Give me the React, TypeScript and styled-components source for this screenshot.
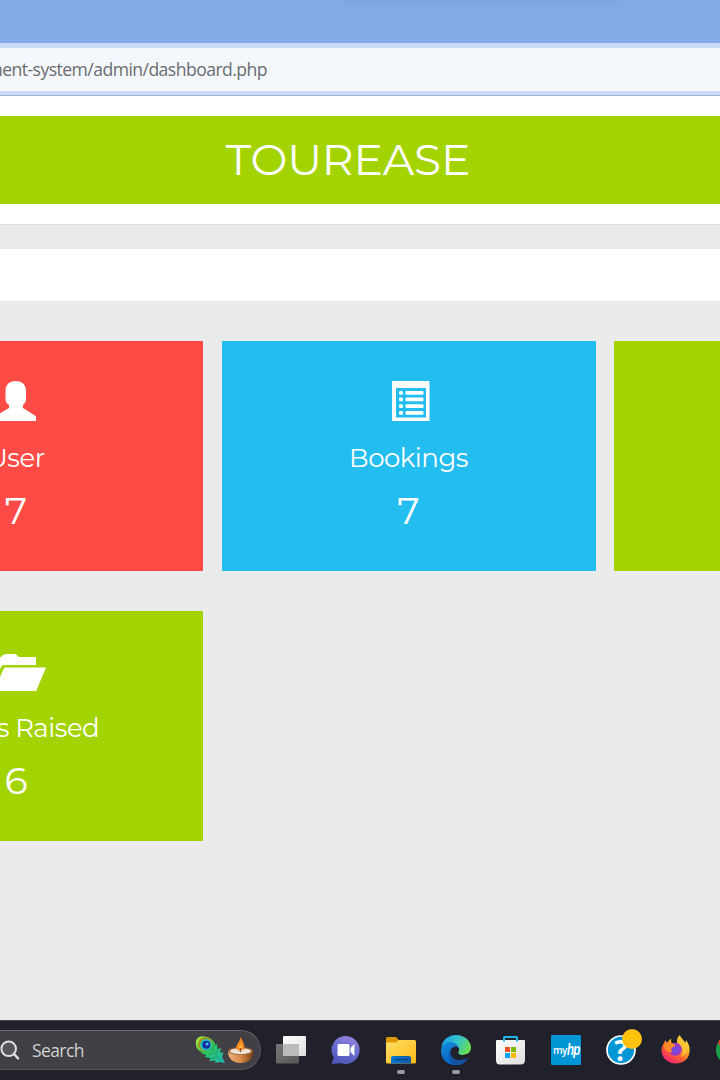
import React from 'react';
import styled, { createGlobalStyle } from 'styled-components';

const GlobalStyle = createGlobalStyle`
  * { box-sizing: border-box; }
  html, body { margin: 0; padding: 0; }
  body { background: #ebebeb; overflow: hidden; }
  svg { display: block; overflow: visible; }
`;

const Screen = styled.div`
  width: 720px;
  height: 1080px;
  display: flex;
  flex-direction: column;
  overflow: hidden;
  background: #ebebeb;
  font-family: Montserrat, Inter, sans-serif;
`;

const TabStrip = styled.div`
  height: 43px;
  flex: none;
  display: flex;
  justify-content: center;
  overflow: hidden;
  background: #85ace9;
`;

const TabShadow = styled.div`
  width: 270px;
  height: 10px;
  margin: -12px 0 0 242px;
  box-shadow: 0 0 12px 1px rgba(70, 95, 140, 0.28);
`;

const AddressRow = styled.div`
  height: 53px;
  flex: none;
  padding: 5px 0 4px;
  background: #cbdcf6;
  border-bottom: 1px solid #9eb0cc;
`;

const AddressBar = styled.div`
  height: 43px;
  width: 100%;
  padding: 0 453px 1px 0;
  display: flex;
  align-items: center;
  justify-content: flex-end;
  overflow: hidden;
  background: #f4f7fc;
`;

const Url = styled.span`
  flex: none;
  white-space: nowrap;
  color: #6b6d70;
  font: 400 17.6px/24px 'Open Sans', 'Noto Sans', sans-serif;
  letter-spacing: -0.55px;
`;

const Header = styled.header`
  height: 129px;
  flex: none;
  padding: 20px 0;
  background: #fff;
  border-bottom: 1px solid #dcdcdc;
`;

const Brand = styled.h1`
  margin: 0;
  height: 88px;
  padding: 0 24px 0 0;
  background: #a3d300;
  color: #fff;
  font-size: 44px;
  font-weight: 400;
  line-height: 86px;
  letter-spacing: -0.2px;
  text-align: center;
`;

const Breadcrumb = styled.div`
  height: 52px;
  flex: none;
  margin-top: 24px;
  background: #fff;
`;

const Cards = styled.main`
  flex: 1;
  display: grid;
  grid-template-columns: repeat(3, 374px);
  grid-auto-rows: 230px;
  gap: 40px 18.5px;
  margin: 40px 0 0 -171px;
`;

const Card = styled.section<{ $color: string }>`
  padding-top: 40px;
  display: flex;
  flex-direction: column;
  align-items: center;
  background: ${p => p.$color};
  color: #fff;
`;

const CardTitle = styled.h3`
  margin: 19px 0 0;
  font-size: 26px;
  font-weight: 400;
  line-height: 36px;
  letter-spacing: -0.5px;
  white-space: nowrap;
`;

const Count = styled.span`
  height: 54px;
  margin-top: 8px;
  font-size: 38px;
  font-weight: 400;
  line-height: 54px;
`;

const Taskbar = styled.footer`
  height: 60px;
  flex: none;
  padding-bottom: 1px;
  display: flex;
  align-items: center;
  overflow: hidden;
  border-top: 1px solid #45474b;
  background: #20212a;
`;

const SearchBox = styled.div`
  width: 281px;
  height: 40px;
  flex: none;
  margin-left: -20px;
  padding: 0 7px 0 19px;
  display: flex;
  align-items: center;
  border: 1px solid #55555b;
  border-top-color: #67676c;
  border-radius: 20px;
  background: #404045;
`;

const SearchLabel = styled.span`
  flex: 1;
  margin-left: 13px;
  color: #d2d2d2;
  font: 400 17.5px/24px 'Open Sans', 'Noto Sans', sans-serif;
  letter-spacing: -0.6px;
`;

const Apps = styled.nav`
  display: flex;
  flex: none;
  gap: 25px;
  margin-left: 15px;
`;

const AppButton = styled.div<{ $running?: boolean }>`
  position: relative;
  width: 30px;
  height: 30px;
  flex: none;
  &::after {
    content: '';
    display: ${p => (p.$running ? 'block' : 'none')};
    position: absolute;
    left: 11px;
    top: 35px;
    width: 8px;
    height: 4px;
    border-radius: 2px;
    background: #9b9b9f;
  }
`;

const HpTile = styled.div`
  width: 30px;
  height: 30px;
  padding-left: 2px;
  display: flex;
  align-items: center;
  border-radius: 1px;
  background: #0096d6;
  color: #fff;
  font: 600 10px/30px 'Open Sans', sans-serif;
  letter-spacing: -0.6px;
`;

const HpMark = styled.b`
  font: italic 700 16px/28px 'Liberation Sans', sans-serif;
  letter-spacing: -1px;
  transform: scaleX(0.72);
  transform-origin: left;
`;

const HelpMark = styled.span`
  position: absolute;
  inset: 0;
  color: #fff;
  font: 700 28px/30px 'Open Sans', sans-serif;
  text-align: center;
`;

const Badge = styled.i`
  position: absolute;
  left: 16px;
  top: -6px;
  width: 20px;
  height: 20px;
  border-radius: 50%;
  background: #ffc20e;
`;

const UserIcon = () => (
  <svg width="42" height="40" viewBox="0 0 42 40" fill="#fff">
    <path d="M10.500 10C10.500 3.500 14.500 0 20.800 0S31 3.500 31 10v8c0 3-1.200 4.500-3 6v3l12 7.500q1 .7 1 2V40H0v-3.500q0-1.300 1-2L14 27v-3c-2.400-1.500-3.500-3-3.500-6Z" />
  </svg>
);

const ListIcon = () => (
  <svg width="42" height="40" viewBox="-4 0 42 40" fill="#fff">
    <path fillRule="evenodd" d="M0 0h37.500v40H0V0ZM4 7v29.500h30V7Z" />
    {[10, 16.500, 23.200, 30].map(y => (
      <g key={y}>
        <rect x="7" y={y} width="4" height="3.800" rx="1.200" />
        <rect x="13.500" y={y} width="18" height="3.800" rx="1" />
      </g>
    ))}
  </svg>
);

const FolderOpenIcon = () => (
  <svg width="60" height="40" viewBox="0 0 60 40" fill="#fff">
    <path d="M0 36V11q0-5 5-5h10q2-3 5-3h8q3 0 4.500 3H50v8H18q-2 0-3 2L5 38H2q-2 0-2-2Z" />
    <path d="M19.700 16.500H60L50.200 40H9q-1 0-.6-1L17.500 18q.7-1.500 2.200-1.500Z" />
  </svg>
);

const SearchIcon = () => (
  <svg width="19" height="20" viewBox="0 0 19 20">
    <circle cx="8.700" cy="8.800" r="7.300" fill="#55565a" stroke="#dedfe1" strokeWidth="2" />
    <path d="m13.900 14 4.200 4.300" stroke="#dedfe1" strokeWidth="2.500" strokeLinecap="round" />
  </svg>
);

const FestiveIcons = () => (
  <svg width="58" height="32" viewBox="0 0 58 32">
    <defs>
      <linearGradient id="feather" x1="0" y1="0" x2="1" y2="1">
        <stop offset="0" stopColor="#c5e534" /><stop offset=".45" stopColor="#27c95a" /><stop offset="1" stopColor="#27b8bd" />
      </linearGradient>
      <linearGradient id="bowl" x1="0" x2="1">
        <stop offset="0" stopColor="#f0b27a" /><stop offset=".5" stopColor="#d98a49" /><stop offset="1" stopColor="#804215" />
      </linearGradient>
    </defs>
    <path d="M.8 9C.8 3 6 1 12 3c4 1 7 4 8.500 8l1.500-1 .5 5 3.500-1-1 5 3.500-1-1.500 5 3 6-5-1-5 1 .5-2.500-6 .5 1-3-6-1 2-2-6-2 2-1C3 17 .8 14 .8 9Z" fill="url(#feather)" />
    <path d="m15 14 12 13M18 16l1-5m2 9 2-5M18 19l-5 2m9 2-6 2" stroke="#138c63" strokeWidth=".7" fill="none" />
    <circle cx="10.300" cy="10.300" r="7" fill="#a5901f" />
    <circle cx="11" cy="10.800" r="5.800" fill="#16c4c6" />
    <circle cx="11.300" cy="10.800" r="4" fill="#102f9c" />
    <circle cx="12" cy="10" r="1.500" fill="#45c5e8" />
    <path d="M33 17c0 7 4 12 12.500 12S58 24 58 17Z" fill="url(#bowl)" />
    <ellipse cx="45.500" cy="17" rx="12.500" ry="4" fill="#99612f" />
    <ellipse cx="45.500" cy="17.200" rx="10.500" ry="3" fill="#eee1d4" />
    <path d="M45.500 3c2 4 4.500 7.500 3.500 11.500-.7 2.500-5.500 3-7.300.4C39.800 11.500 45 8.500 45.500 3Z" fill="#ff8a20" />
    <path d="M46 9c.8 3 2 6-1 6-3-1 0-3 1-6Z" fill="#ffbd46" />
    <path d="M45.300 14v4" stroke="#6d3518" />
  </svg>
);

const TaskViewIcon = () => (
  <svg width="30" height="30" viewBox="0 0 30 30">
    <defs>
      <linearGradient id="front" x1="0" y1="0" x2="1" y2="1"><stop stopColor="#fff" /><stop offset="1" stopColor="#dedede" /></linearGradient>
      <linearGradient id="back" x1="0" y1="0" x2="1" y2="1"><stop stopColor="#777" /><stop offset="1" stopColor="#555" /></linearGradient>
    </defs>
    <rect x="0" y="9" width="23" height="19.500" rx="1" fill="url(#back)" />
    <rect x="7" y="1" width="23" height="20" rx="1" fill="url(#front)" />
    <path d="M7 9h16v12H7Z" fill="#bbb" />
  </svg>
);

const ChatIcon = () => (
  <svg width="30" height="30" viewBox="0 0 30 30">
    <defs>
      <linearGradient id="chat" x1=".7" y1="0" x2=".3" y2="1">
        <stop stopColor="#9584dc" /><stop offset=".5" stopColor="#656bcd" /><stop offset="1" stopColor="#5055ba" />
      </linearGradient>
    </defs>
    <path d="M15 1a14 14 0 1 1-5 27.200L.5 29l2.200-6.600A14 14 0 0 1 15 1Z" fill="url(#chat)" />
    <rect x="6.500" y="9" width="12" height="12" rx="1.500" fill="#fff" />
    <path d="m19.500 13 3-3.300q1-.8 1 .6v9.400q0 1.400-1 .6l-3-3.300Z" fill="#fff" />
  </svg>
);

const ExplorerIcon = () => (
  <svg width="30" height="30" viewBox="0 0 30 30">
    <defs>
      <linearGradient id="folder" x1="0" y1="0" x2="1" y2="1"><stop stopColor="#ffdf68" /><stop offset="1" stopColor="#ffb913" /></linearGradient>
      <linearGradient id="dock" x2="1"><stop stopColor="#0879d3" /><stop offset="1" stopColor="#1359a7" /></linearGradient>
    </defs>
    <path d="M0 3.500Q0 2 1.500 2H10l3 3H29v5H0Z" fill="#df9800" />
    <path d="M0 7.500h10L13 5h15.500Q30 5 30 6.500V27q0 1.500-1.500 1.500h-27Q0 28.500 0 27Z" fill="url(#folder)" />
    <path d="M5 28.500V23q0-2 2-2h16q2 0 2 2v5.500Z" fill="url(#dock)" />
    <path d="M9 24.600h12" stroke="#06417f" strokeWidth="1.300" strokeLinecap="round" />
  </svg>
);

const EdgeIcon = () => (
  <svg width="30" height="30" viewBox="0 0 30 30">
    <defs>
      <linearGradient id="edgeTop" x1="0" y1=".2" x2="1" y2=".6"><stop stopColor="#199de2" /><stop offset=".5" stopColor="#36c4cb" /><stop offset="1" stopColor="#6bdd4c" /></linearGradient>
      <linearGradient id="edgeBlue" x1="0" y1="0" x2=".4" y2="1"><stop stopColor="#168edc" /><stop offset="1" stopColor="#0763c5" /></linearGradient>
    </defs>
    <path d="M.4 12C1.500 4.800 7.500 0 15 0c8.500 0 15 6 15 12.500 0 5-4 7.500-8.500 7.500-3.600 0-5-1.400-4.200-3 1.800-3-.2-6-3.800-7C7.500 8 2.500 9 .4 12Z" fill="url(#edgeTop)" />
    <path d="M0 15C.5 10 4.500 7 9 7c5 0 9.500 3.600 9.400 8-.4-2-2-3.500-4.400-3.500-7.500 2-7.500 14 3.500 18C8 32-.5 25 0 15Z" fill="url(#edgeBlue)" />
    <path d="M13 11.500c-3 1.700-4 5-2.500 9C12 24.500 18 27 27.500 23 24 28.500 19 31 14 29.800 8 28 5.500 15 13 11.500Z" fill="#1450a1" />
    <path d="M14.500 12c2.500-.2 4.500 2 3.300 4.300-1.600 2-.3 3.700 3.700 3.700 2.700 0 4.500-.7 6-1.700l.3.700c-1.700 2.500-4.800 3.200-7.800 2.500-4.500-.9-7.500-3.500-7-6.500.2-1.700 1-2 1.500-3Z" fill="#20212a" />
  </svg>
);

const StoreIcon = () => (
  <svg width="30" height="30" viewBox="0 0 30 30">
    <defs><linearGradient id="store" x1="0" y1="0" x2="1" y2="1"><stop stopColor="#fff" /><stop offset="1" stopColor="#dedede" /></linearGradient></defs>
    <path d="M0 6q0-1 1-1h27q1 0 1 1v19q0 4.500-4.500 4.500h-21Q0 29.500 0 25Z" fill="url(#store)" />
    <path d="M8 6.500V2.500Q8 2 8.500 2h12q.5 0 .5.500v4" fill="none" stroke="#20b6ec" strokeWidth="2" />
    <path d="M9 12h5v5H9Z" fill="#f15025" /><path d="M15 12h5v5h-5Z" fill="#7fba00" />
    <path d="M9 18h5v5H9Z" fill="#00a4ef" /><path d="M15 18h5v5h-5Z" fill="#ffb900" />
  </svg>
);

const FirefoxIcon = () => (
  <svg width="30" height="30" viewBox="0 0 30 30">
    <defs>
      <linearGradient id="fox" x1=".85" y1="0" x2=".2" y2="1"><stop stopColor="#fff44f" /><stop offset=".35" stopColor="#ffb52b" /><stop offset=".65" stopColor="#ff5c33" /><stop offset="1" stopColor="#f51a86" /></linearGradient>
      <radialGradient id="globe"><stop stopColor="#6850ed" /><stop offset="1" stopColor="#a137c1" /></radialGradient>
    </defs>
    <path d="M2 10 4.500 5l1.300 3L10 3.500l.4 4.400L16 8c-.5-4 1-6.500 3-8 0 4 3.500 5 5.500 8l.5-3c3 4 4 7.500 3.500 12C28 24 22 28.500 14.500 28.500S0.500 23 .5 15c0-2 .5-4 1.500-5Z" fill="url(#fox)" />
    <circle cx="14.300" cy="14.300" r="6.500" fill="url(#globe)" />
    <path d="M2.500 9c3.500-2.500 6.500-2 8.500-.4l3.500 1.400c-.2 1.800-2.700 1.800-3.500 2.700-1.400 1.800-1 3.300.5 4.300-4 1.800-8-2-9-8Z" fill="#ff8b27" />
    <path d="M17 7.500c6.500 4 6.500 10.500 3 14.500 7-3 8-10 4.500-14L19 1c-2 2-2.500 4-2 6.500Z" fill="#ffc535" />
  </svg>
);

const ChromeIcon = () => (
  <svg width="30" height="30" viewBox="0 0 30 30">
    <circle cx="15" cy="15" r="15" fill="#1a9d4b" />
    <path d="M2 7.500A15 15 0 0 1 28 7.500H15L8.500 18.700Z" fill="#e33b2e" />
    <path d="M28 7.500A15 15 0 0 1 15 30l6.500-11.200L15 7.500Z" fill="#fcc934" />
    <circle cx="15" cy="15" r="7" fill="#fff" /><circle cx="15" cy="15" r="5.500" fill="#4285f4" />
  </svg>
);

export default function App() {
  return (
    <Screen>
      <GlobalStyle />
      <TabStrip><TabShadow /></TabStrip>
      <AddressRow>
        <AddressBar><Url>management-system/admin/dashboard.php</Url></AddressBar>
      </AddressRow>
      <Header><Brand>TOUREASE</Brand></Header>
      <Breadcrumb />
      <Cards>
        <Card $color="#ff4b45">
          <UserIcon />
          <CardTitle>User</CardTitle>
          <Count>7</Count>
        </Card>
        <Card $color="#23bdf0">
          <ListIcon />
          <CardTitle>Bookings</CardTitle>
          <Count>7</Count>
        </Card>
        <Card $color="#a3d300" />
        <Card $color="#a3d300">
          <FolderOpenIcon />
          <CardTitle>Issues Raised</CardTitle>
          <Count>6</Count>
        </Card>
      </Cards>
      <Taskbar>
        <SearchBox>
          <SearchIcon />
          <SearchLabel>Search</SearchLabel>
          <FestiveIcons />
        </SearchBox>
        <Apps>
          <AppButton><TaskViewIcon /></AppButton>
          <AppButton><ChatIcon /></AppButton>
          <AppButton $running><ExplorerIcon /></AppButton>
          <AppButton $running><EdgeIcon /></AppButton>
          <AppButton><StoreIcon /></AppButton>
          <AppButton><HpTile>my<HpMark>hp</HpMark></HpTile></AppButton>
          <AppButton>
            <svg width="30" height="30" viewBox="0 0 30 30"><circle cx="15" cy="15" r="14" fill="#0096d6" stroke="#fff" strokeWidth="1.700" /></svg>
            <HelpMark>?</HelpMark>
            <Badge />
          </AppButton>
          <AppButton><FirefoxIcon /></AppButton>
          <AppButton><ChromeIcon /></AppButton>
        </Apps>
      </Taskbar>
    </Screen>
  );
}
